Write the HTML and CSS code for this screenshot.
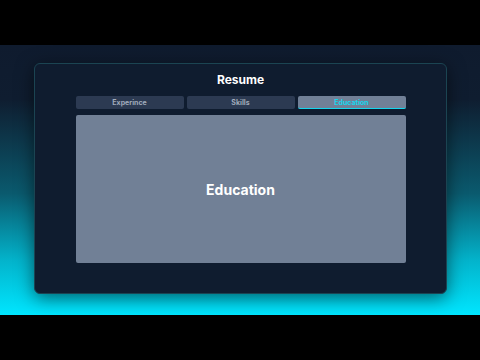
FILE: index.html
```html
<!DOCTYPE html>
<html lang="en">
<head>
    <meta charset="UTF-8">
    <meta name="viewport" content="width=device-width, initial-scale=1.0">
    <title>Resume Tabs</title>
    <link rel="stylesheet" href="styles.css">
</head>
<body>
    <div class="bar"></div>
    <div class="stage">
        <div class="card">
            <h1>Resume</h1>
            <div class="tabs">
                <button class="tab">Experince</button>
                <button class="tab">Skills</button>
                <button class="tab active">Education</button>
            </div>
            <div class="panel">Education</div>
        </div>
    </div>
    <div class="bar"></div>
</body>
</html>
```
FILE: styles.css
```css
body {
    margin: 0;
    padding: 0;
    background-color: #000;
    font-family: 'Inter', 'Lato', sans-serif;
    overflow: hidden;
}
.bar {
    height: 45px;
    background-color: #000;
}
.stage {
    height: 270px;
    box-sizing: border-box;
    padding-top: 18px;
    background: linear-gradient(to bottom, #0f1b2e 0%, #0f1d30 20%, #0a5a6e 55%, #03b4cc 80%, #00e6ff 100%);
}
.card {
    width: 413px;
    height: 231px;
    margin: 0 auto;
    box-sizing: border-box;
    padding: 8px 40px 0 41px;
    background-color: #0f1c2f;
    border: 1px solid #1b4452;
    border-radius: 6px;
    box-shadow: 0px 4px 18px rgba(0, 0, 0, 0.55);
}
h1 {
    margin: 0 0 8px;
    font-size: 12px;
    line-height: 16px;
    font-weight: 700;
    color: #ffffff;
    text-align: center;
}
.tabs {
    display: flex;
    gap: 3px;
}
.tab {
    flex: 1;
    height: 13px;
    padding: 0;
    border: none;
    border-radius: 2px;
    background-color: #2c3a52;
    color: #a0aabb;
    font-family: inherit;
    font-size: 7px;
    font-weight: 700;
    cursor: pointer;
}
.tab.active {
    background-color: #718097;
    color: #16d6ee;
    border-bottom: 1px solid #16d6ee;
}
.panel {
    margin-top: 6px;
    height: 148px;
    display: flex;
    align-items: center;
    justify-content: center;
    background-color: #718096;
    border-radius: 2px;
    color: #ffffff;
    font-size: 14px;
    font-weight: 700;
}
```
